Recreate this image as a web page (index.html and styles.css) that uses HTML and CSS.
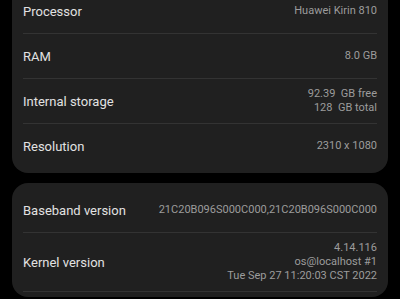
FILE: index.html
```html
<!DOCTYPE html>
<html>
<head>
<meta charset="utf-8">
<link rel="stylesheet" href="styles.css">
</head>
<body>
<div class="page">
  <div class="card card-top">
    <div class="row">
      <div class="label">Processor</div>
      <div class="value">Huawei Kirin 810</div>
    </div>
    <div class="row">
      <div class="label">RAM</div>
      <div class="value">8.0 GB</div>
    </div>
    <div class="row">
      <div class="label">Internal storage</div>
      <div class="value"><div>92.39&nbsp; GB free</div><div>128&nbsp; GB total</div></div>
    </div>
    <div class="row last">
      <div class="label">Resolution</div>
      <div class="value">2310 x 1080</div>
    </div>
  </div>
  <div class="card">
    <div class="row">
      <div class="label">Baseband version</div>
      <div class="value">21C20B096S000C000,21C20B096S000C000</div>
    </div>
    <div class="row">
      <div class="label">Kernel version</div>
      <div class="value"><div>4.14.116</div><div>os@localhost #1</div><div>Tue Sep 27 11:20:03 CST 2022</div></div>
    </div>
  </div>
</div>
</body>
</html>
```

FILE: styles.css
```css
html, body {
  margin: 0;
  padding: 0;
  background: #000;
  height: 100%;
  overflow: hidden;
}
.page {
  display: flex;
  flex-direction: column;
  gap: 10px;
  padding: 0 12px;
  margin-top: -16px;
  font-family: Roboto, "Noto Sans", sans-serif;
}
.card {
  background: #202020;
  border-radius: 16px;
  padding: 5px 11px;
}
.row {
  display: flex;
  justify-content: space-between;
  align-items: center;
  min-height: 28px;
  padding: 8px 0;
  border-bottom: 1px solid #333;
}
.row.last {
  border-bottom: none;
}
.label {
  color: #e2e2e2;
  font-size: 13px;
  white-space: nowrap;
}
.value {
  color: #9c9c9c;
  font-size: 11px;
  line-height: 14px;
  text-align: right;
  white-space: nowrap;
}
```
